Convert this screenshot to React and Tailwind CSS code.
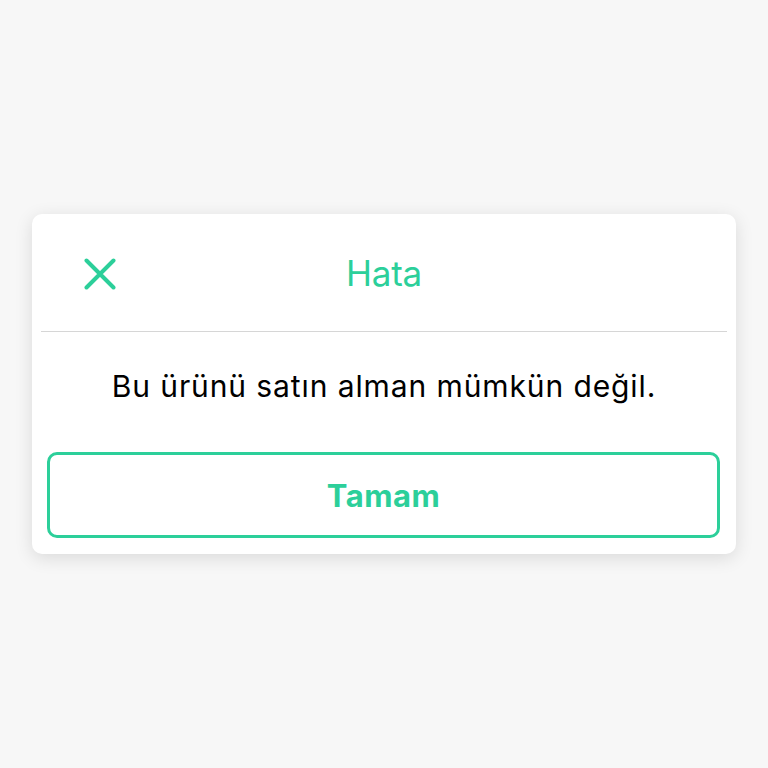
export default function App() {
  return (
    <div
      className="min-h-screen w-full flex items-center justify-center bg-[#f7f7f7]"
      style={{ fontFamily: "Inter, 'Noto Sans', sans-serif" }}
    >
      <div className="w-[704px] rounded-[10px] bg-white shadow-[0_4px_18px_rgba(0,0,0,0.12)] flex flex-col">
        {/* header */}
        <div className="grid grid-cols-[1fr_auto_1fr] items-center h-[117px] px-[52px] pt-[2px]">
          <button className="w-[32px] h-[32px] flex items-center justify-center text-[#2ccf9a]">
            <svg width="32" height="32" viewBox="0 0 32 32" fill="none">
              <path d="M2.5 2.5 L29.5 29.5 M29.5 2.5 L2.5 29.5" stroke="currentColor" strokeWidth="4" strokeLinecap="round" />
            </svg>
          </button>
          <h1 className="text-[35px] leading-none text-[#2ccf9a] font-normal tracking-[-0.2px]">Hata</h1>
          <div />
        </div>
        <div className="mx-[9px] h-px bg-[#d6d6d6]" />
        {/* message */}
        <div className="h-[120px] flex items-center justify-center pb-[12px]">
          <p className="text-[30px] leading-none text-black tracking-[0.9px]">Bu ürünü satın alman mümkün değil.</p>
        </div>
        {/* action */}
        <div className="pl-[15px] pr-[16px] pb-[16px]">
          <button className="w-full h-[86px] rounded-[10px] border-[3.5px] border-[#2ccf9a] flex items-center justify-center">
            <span className="text-[31px] leading-none font-bold text-[#2ccf9a] tracking-[0.5px]">Tamam</span>
          </button>
        </div>
      </div>
    </div>
  );
}
